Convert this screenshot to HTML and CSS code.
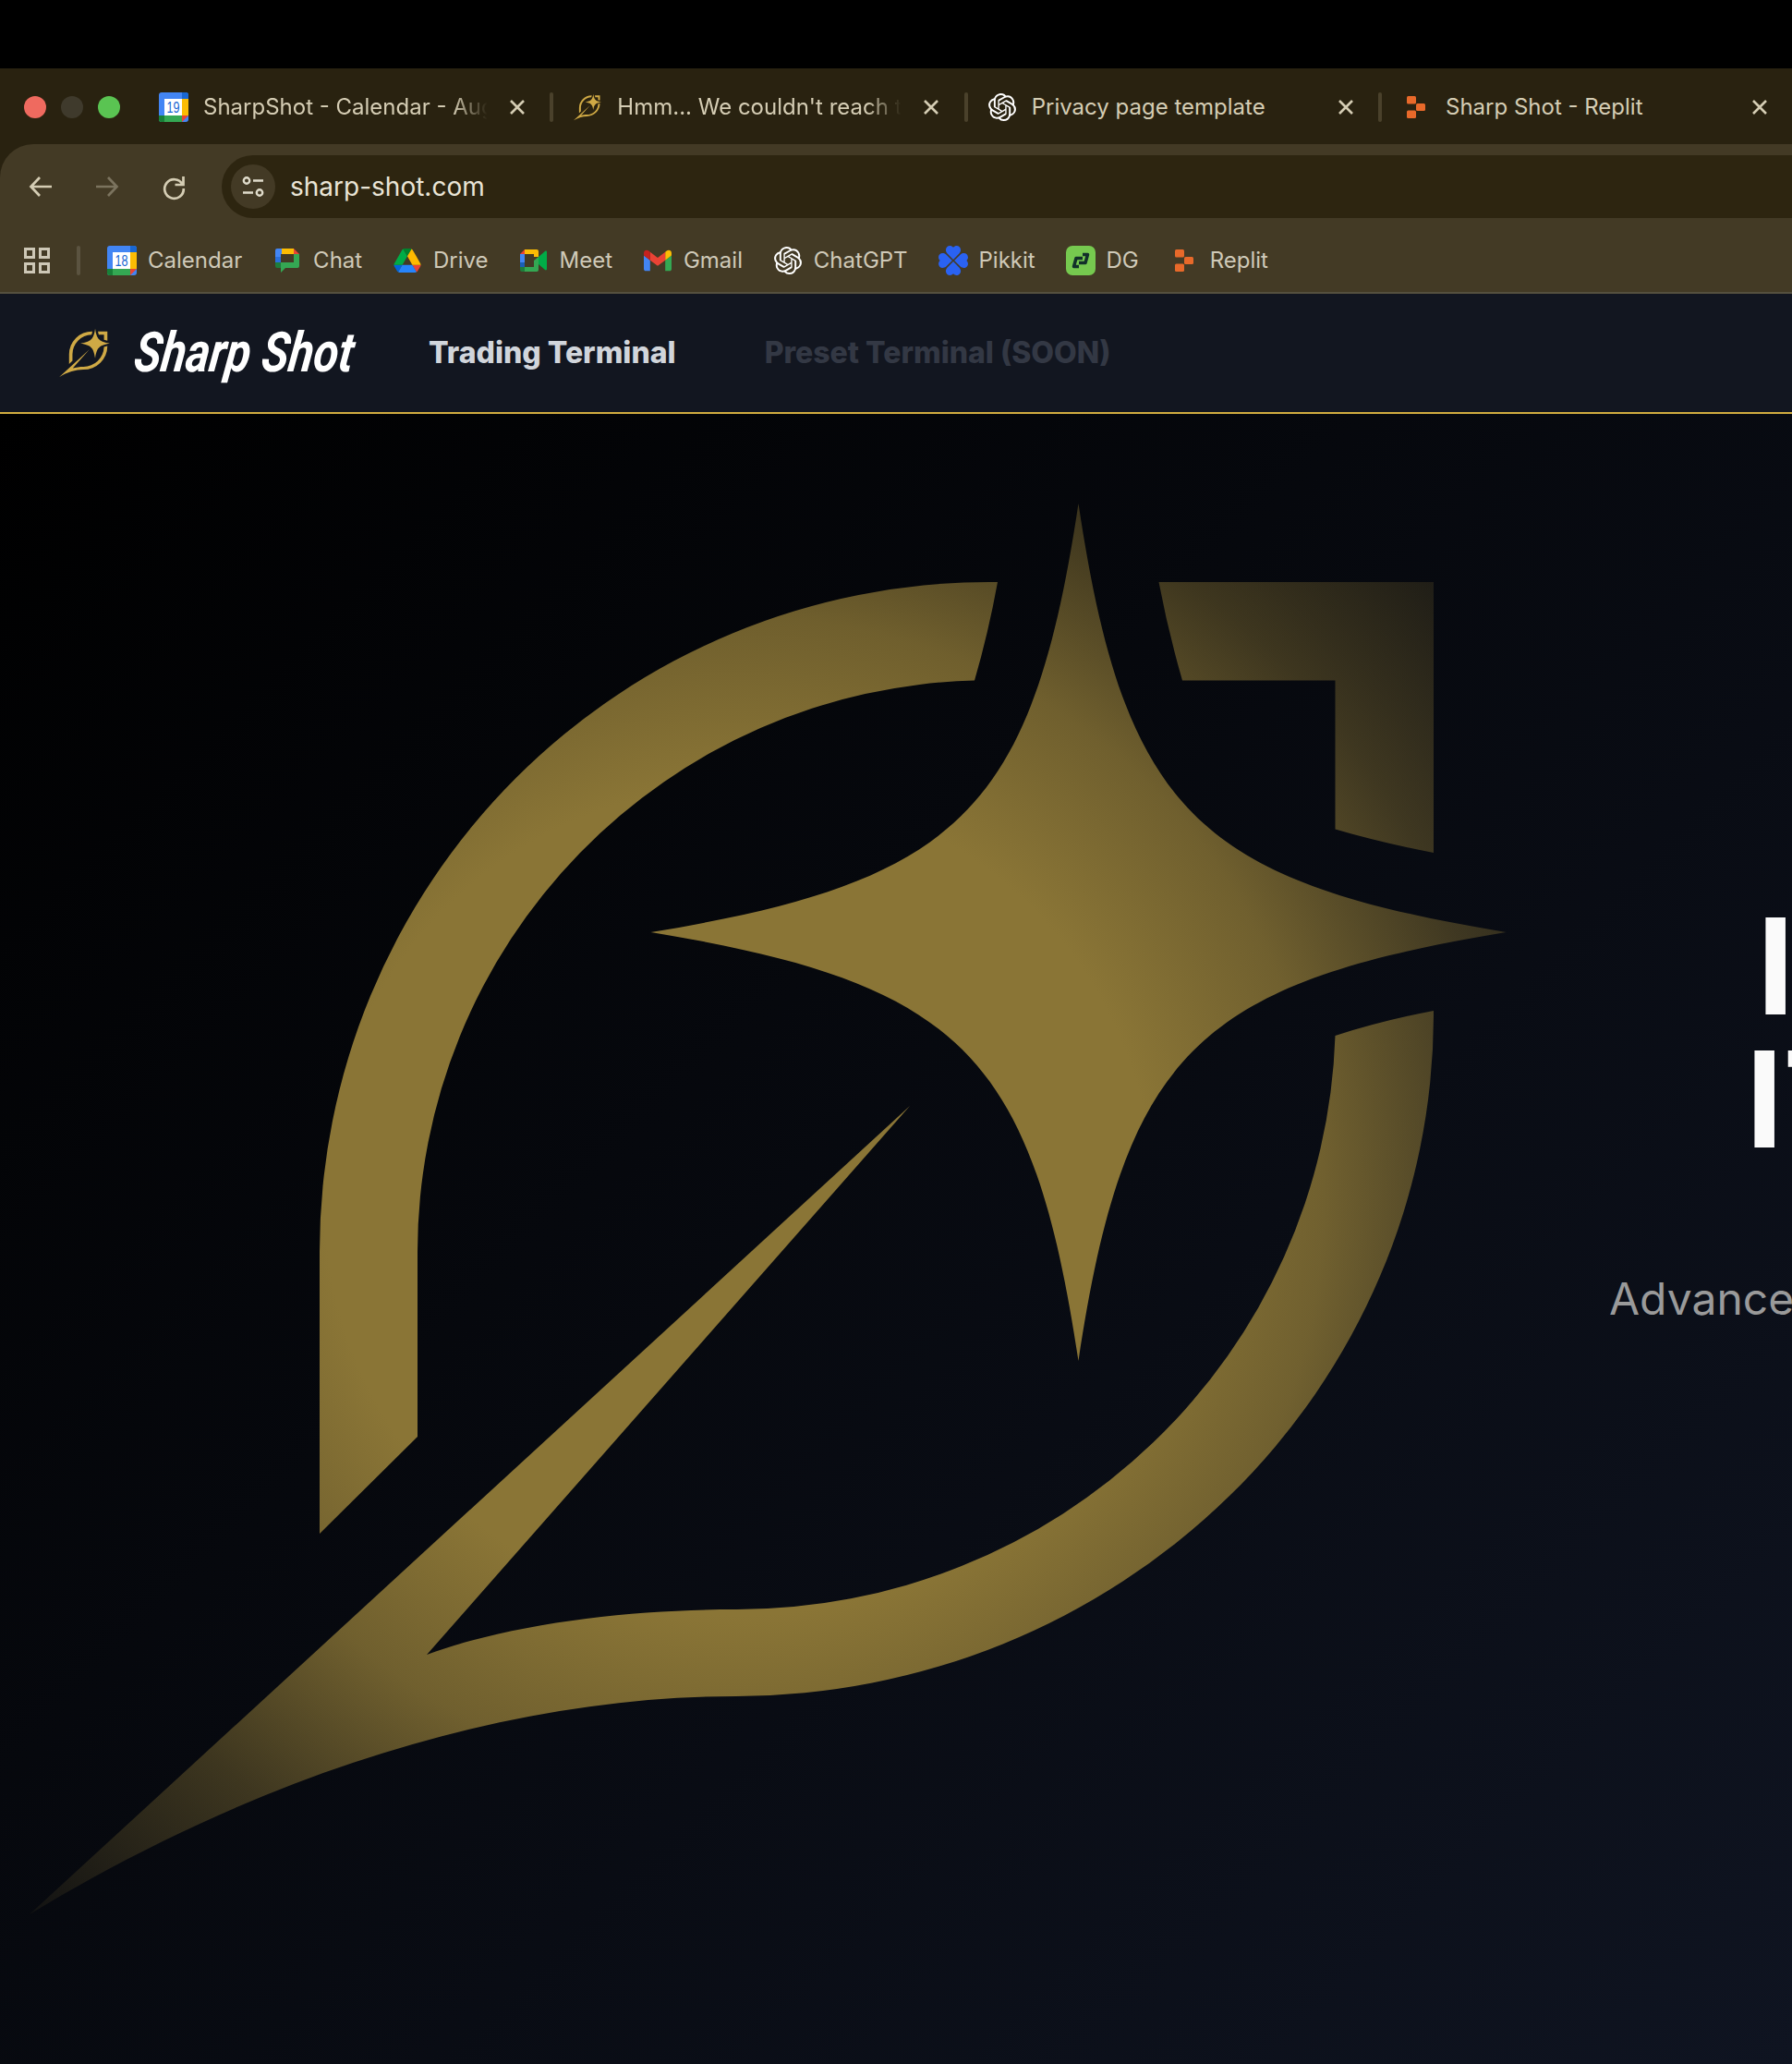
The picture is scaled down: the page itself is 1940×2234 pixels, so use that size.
FILE: index.html
```html
<!DOCTYPE html>
<html lang="en">
<head>
<meta charset="utf-8">
<title>Sharp Shot</title>
<link rel="stylesheet" href="styles.css">
</head>
<body>
<svg class="defs" width="0" height="0" aria-hidden="true">
  <defs>
    <radialGradient id="fade" gradientUnits="userSpaceOnUse" cx="800" cy="1300" r="1150">
      <stop offset="0" stop-color="#8a7536"/>
      <stop offset=".39" stop-color="#8a7536"/>
      <stop offset=".55" stop-color="#8a7536" stop-opacity=".8"/>
      <stop offset=".63" stop-color="#8a7536" stop-opacity=".62"/>
      <stop offset=".72" stop-color="#8a7536" stop-opacity=".42"/>
      <stop offset=".77" stop-color="#8a7536" stop-opacity=".34"/>
      <stop offset=".875" stop-color="#8a7536" stop-opacity=".19"/>
      <stop offset=".93" stop-color="#8a7536" stop-opacity=".11"/>
      <stop offset="1" stop-color="#8a7536" stop-opacity="0"/>
    </radialGradient>
    <path id="mark" d="M1167.5 545C1217.5 879 1297.5 954 1630.5 1009C1297.5 1064 1217.5 1139 1167.5 1473C1117.5 1139 1037.5 1064 704.5 1009C1037.5 954 1117.5 879 1167.5 545Z
      M1080 630H1071A725 725 0 0 0 346 1355V1660L452 1555V1355A619 619 0 0 1 1055 736.5Q1070 685 1080 630Z
      M1254.5 630H1552V923Q1495 912 1445.5 897.5V736.5H1280Q1265 685 1254.5 630Z
      M1552 1094V1100A757 738 0 0 1 797 1836C560 1836 290 1915 32 2072L985 1197L462 1791C560 1755 690 1742 797 1742A648 642 0 0 0 1445.5 1121Q1495 1105 1552 1094Z"/>
    <path id="openai" d="M22.2819 9.8211a5.9847 5.9847 0 0 0-.5157-4.9108 6.0462 6.0462 0 0 0-6.5098-2.9A6.0651 6.0651 0 0 0 4.9807 4.1818a5.9847 5.9847 0 0 0-3.9977 2.9 6.0462 6.0462 0 0 0 .7427 7.0966 5.98 5.98 0 0 0 .511 4.9107 6.051 6.051 0 0 0 6.5146 2.9001A5.9847 5.9847 0 0 0 13.2599 24a6.0557 6.0557 0 0 0 5.7718-4.2058 5.9894 5.9894 0 0 0 3.9977-2.9001 6.0557 6.0557 0 0 0-.7475-7.0729zm-9.022 12.6081a4.4755 4.4755 0 0 1-2.8764-1.0408l.1419-.0804 4.7783-2.7582a.7948.7948 0 0 0 .3927-.6813v-6.7369l2.02 1.1686a.071.071 0 0 1 .038.052v5.5826a4.504 4.504 0 0 1-4.4945 4.4944zm-9.6607-4.1254a4.4708 4.4708 0 0 1-.5346-3.0137l.142.0852 4.783 2.7582a.7712.7712 0 0 0 .7806 0l5.8428-3.3685v2.3324a.0804.0804 0 0 1-.0332.0615L9.74 19.9502a4.4992 4.4992 0 0 1-6.1408-1.6464zM2.3408 7.8956a4.485 4.485 0 0 1 2.3655-1.9728V11.6a.7664.7664 0 0 0 .3879.6765l5.8144 3.3543-2.0201 1.1685a.0757.0757 0 0 1-.071 0l-4.8303-2.7865A4.504 4.504 0 0 1 2.3408 7.872zm16.5963 3.8558L13.1038 8.364 15.1192 7.2a.0757.0757 0 0 1 .071 0l4.8303 2.7913a4.4944 4.4944 0 0 1-.6765 8.1042v-5.6772a.79.79 0 0 0-.407-.667zm2.0107-3.0231l-.142-.0852-4.7735-2.7818a.7759.7759 0 0 0-.7854 0L9.409 9.2297V6.8974a.0662.0662 0 0 1 .0284-.0615l4.8303-2.7866a4.4992 4.4992 0 0 1 6.6802 4.66zM8.3065 12.863l-2.02-1.1638a.0804.0804 0 0 1-.038-.0567V6.0742a4.4992 4.4992 0 0 1 7.3757-3.4537l-.142.0805L8.704 5.459a.7948.7948 0 0 0-.3927.6813zm1.0976-2.3654l2.602-1.4998 2.6069 1.4998v2.9994l-2.5974 1.4997-2.6067-1.4997Z"/>
    <g id="replit">
      <rect x="0" y="0" width="10" height="8.5" rx="1.5"/>
      <rect x="10" y="8" width="10" height="8" rx="1.5"/>
      <rect x="0" y="15.5" width="10" height="8.5" rx="1.5"/>
    </g>
    <g id="gcal">
      <rect x="0" y="0" width="32" height="32" rx="3" fill="#4285f4"/>
      <path d="M25 7h7v18h-7z" fill="#fbbc04"/>
      <path d="M0 25h25v7H3a3 3 0 0 1-3-3z" fill="#34a853"/>
      <path d="M0 25h6v7H3a3 3 0 0 1-3-3z" fill="#188038"/>
      <path d="M25 25h7l-7 7z" fill="#ea4335"/>
      <path d="M6 7h19v18H6z" fill="#fff"/>
      <path d="M25 0h4a3 3 0 0 1 3 3v4h-7z" fill="#1967d2"/>
    </g>
  </defs>
</svg>

<div class="top-black"></div>

<header class="browser">
  <div class="tabstrip">
    <div class="lights">
      <span class="light light-red"></span>
      <span class="light light-off"></span>
      <span class="light light-green"></span>
    </div>
    <div class="tabs">
      <div class="tab">
        <span class="slot"><svg class="ico32" viewBox="0 0 32 32"><use href="#gcal"/><text class="cal-num" x="15.5" y="22" textLength="14" lengthAdjust="spacingAndGlyphs">19</text></svg></span>
        <span class="tab-title tab-fade">SharpShot - Calendar - Aug</span>
        <svg class="tab-close" viewBox="0 0 16 16"><path d="M1 1l14 14M15 1L1 15"/></svg>
        <span class="tab-sep"></span>
      </div>
      <div class="tab">
        <span class="slot"><svg class="ico-feather" viewBox="32 545 1600 1528"><use href="#mark" class="gold"/></svg></span>
        <span class="tab-title tab-fade">Hmm... We couldn't reach t</span>
        <svg class="tab-close" viewBox="0 0 16 16"><path d="M1 1l14 14M15 1L1 15"/></svg>
        <span class="tab-sep"></span>
      </div>
      <div class="tab">
        <span class="slot"><svg class="ico-gpt" viewBox="0 0 24 24"><use href="#openai" class="white"/></svg></span>
        <span class="tab-title">Privacy page template</span>
        <svg class="tab-close" viewBox="0 0 16 16"><path d="M1 1l14 14M15 1L1 15"/></svg>
        <span class="tab-sep"></span>
      </div>
      <div class="tab">
        <span class="slot"><svg class="ico-replit" viewBox="0 0 20 24"><use href="#replit" class="orange"/></svg></span>
        <span class="tab-title">Sharp Shot - Replit</span>
        <svg class="tab-close" viewBox="0 0 16 16"><path d="M1 1l14 14M15 1L1 15"/></svg>
      </div>
    </div>
  </div>

  <div class="chrome">
    <div class="toolbar">
      <div class="nav-btns">
        <svg class="tool" viewBox="0 0 24 24"><path d="M24 12H2M11 2L1.500 12 11 22"/></svg>
        <svg class="tool tool-dim" viewBox="0 0 24 24"><path d="M0 12h22M13 2l9.500 10L13 22"/></svg>
        <svg class="tool" viewBox="0 0 24 24"><path d="M22.500 1v9h-9M21.500 9.500A10.300 10.300 0 1 0 22.800 14"/></svg>
      </div>
      <div class="address">
        <span class="site-btn">
          <svg class="tune" viewBox="0 0 24 24"><circle cx="5" cy="5.500" r="3.200"/><path d="M12 5.500h11M1 18.500h11"/><circle cx="19" cy="18.500" r="3.200"/></svg>
        </span>
        <span class="url">sharp-shot.com</span>
      </div>
    </div>
    <div class="bookmarks">
      <svg class="apps" viewBox="0 0 28 28"><path d="M1.500 1.500h9v9h-9zM17.500 1.500h9v9h-9zM1.500 17.500h9v9h-9zM17.500 17.500h9v9h-9z"/></svg>
      <span class="bm-sep"></span>
      <div class="bm-list">
        <a class="bm"><span class="slot"><svg class="ico32" viewBox="0 0 32 32"><use href="#gcal"/><text class="cal-num" x="15.500" y="22" textLength="14" lengthAdjust="spacingAndGlyphs">18</text></svg></span>Calendar</a>
        <a class="bm"><span class="slot"><svg class="ico-chat" viewBox="0 0 26 26">
          <path d="M2 0h5v6H6v3H0V2a2 2 0 0 1 2-2z" fill="#4285f4"/>
          <path d="M0 9h6v6H0z" fill="#2a6fdb"/>
          <path d="M7 0h13v6H7z" fill="#fbbc04"/>
          <path d="M20 0l6 6h-6z" fill="#ea4335"/>
          <path d="M20 6h6v13a2 2 0 0 1-2 2H11l-5 5v-5h0V15h14z" fill="#34a853"/>
          <path d="M0 15h6v6H2a2 2 0 0 1-2-2z" fill="#1e7d3c"/>
        </svg></span>Chat</a>
        <a class="bm"><span class="slot"><svg class="ico-drive" viewBox="0 0 87.300 78">
          <path d="m6.600 66.850 3.850 6.650c.8 1.400 1.950 2.500 3.300 3.300l13.750-23.800h-27.500c0 1.550.4 3.100 1.200 4.500z" fill="#0066da"/>
          <path d="m43.650 25-13.750-23.800c-1.350.8-2.500 1.900-3.300 3.300l-25.400 44a9.060 9.060 0 0 0 -1.200 4.500h27.500z" fill="#00ac47"/>
          <path d="m73.550 76.800c1.350-.8 2.500-1.900 3.300-3.300l1.600-2.750 7.650-13.250c.8-1.400 1.200-2.950 1.200-4.500h-27.502l5.852 11.500z" fill="#ea4335"/>
          <path d="m43.650 25 13.750-23.800c-1.350-.8-2.900-1.200-4.500-1.200h-18.500c-1.600 0-3.150.45-4.500 1.200z" fill="#00832d"/>
          <path d="m59.800 53h-32.300l-13.750 23.800c1.350.8 2.900 1.200 4.500 1.200h50.800c1.600 0 3.150-.45 4.500-1.200z" fill="#2684fc"/>
          <path d="m73.400 26.500-12.700-22c-.8-1.400-1.950-2.500-3.300-3.300l-13.750 23.800 16.150 28h27.450c0-1.550-.4-3.100-1.200-4.500z" fill="#ffba00"/>
        </svg></span>Drive</a>
        <a class="bm"><span class="slot"><svg class="ico-meet" viewBox="0 0 29 24">
          <path d="M5 0L0 5h5z" fill="#ea4335"/>
          <path d="M0 5h5v9H0z" fill="#4285f4"/>
          <path d="M0 14h5v5H0z" fill="#1a5fb4"/>
          <path d="M0 19h5v5H2a2 2 0 0 1-2-2z" fill="#1e7d3c"/>
          <path d="M5 0h13a2 2 0 0 1 2 2v6h-5V5H5z" fill="#fbbc04"/>
          <path d="M5 19h10v-7l5-4v14a2 2 0 0 1-2 2H5z" fill="#34a853"/>
          <path d="M20 8l7-6c1-.8 2-.3 2 1v18c0 1.300-1 1.800-2 1l-7-6z" fill="#00ac47"/>
        </svg></span>Meet</a>
        <a class="bm"><span class="slot"><svg class="ico-gmail" viewBox="52 42 88 66">
          <path fill="#4285f4" d="M58 108h14V74L52 59v43c0 3.320 2.690 6 6 6"/>
          <path fill="#34a853" d="M120 108h14c3.320 0 6-2.690 6-6V59l-20 15"/>
          <path fill="#fbbc04" d="M120 48v26l20-15v-8c0-7.420-8.470-11.650-14.400-7.200"/>
          <path fill="#ea4335" d="M72 74V48l24 18 24-18v26L96 92"/>
          <path fill="#c5221f" d="M52 51v8l20 15V48l-5.600-4.200c-5.940-4.450-14.400-.22-14.400 7.200"/>
        </svg></span>Gmail</a>
        <a class="bm"><span class="slot"><svg class="ico-gpt" viewBox="0 0 24 24"><use href="#openai" class="white"/></svg></span>ChatGPT</a>
        <a class="bm"><span class="slot"><svg class="ico32" viewBox="1.500 1.500 29 29">
          <g class="pikkit">
            <path d="M16 15L10 9C6 4 12-1 16 3C20-1 26 4 22 9Z"/>
            <path d="M16 15L10 9C6 4 12-1 16 3C20-1 26 4 22 9Z" transform="rotate(90 16 16)"/>
            <path d="M16 15L10 9C6 4 12-1 16 3C20-1 26 4 22 9Z" transform="rotate(180 16 16)"/>
            <path d="M16 15L10 9C6 4 12-1 16 3C20-1 26 4 22 9Z" transform="rotate(270 16 16)"/>
          </g>
        </svg></span>Pikkit</a>
        <a class="bm"><span class="slot"><svg class="ico32" viewBox="0 0 32 32">
          <rect width="32" height="32" rx="7" fill="#76c94f"/>
          <path class="dg-link" d="M14 22.500H8.500L11 13.500H18M18 9.500H23.500L21 18.500H14"/>
        </svg></span>DG</a>
        <a class="bm"><span class="slot"><svg class="ico-replit" viewBox="0 0 20 24"><use href="#replit" class="orange"/></svg></span>Replit</a>
      </div>
    </div>
  </div>
</header>

<nav class="sitenav">
  <svg class="brand-mark" viewBox="32 545 1600 1528"><use href="#mark" class="gold"/></svg>
  <span class="wordmark">Sharp Shot</span>
  <div class="links">
    <a class="link link-on">Trading Terminal</a>
    <a class="link link-off">Preset Terminal (SOON)</a>
  </div>
</nav>

<main class="hero">
  <svg class="hero-art" viewBox="0 448 1700 1786"><use href="#mark" class="fade"/></svg>
  <div class="hero-copy">
    <h1 class="headline"><span class="line line-a">I</span><span class="line line-b">IT</span></h1>
    <p class="subtitle">Advance</p>
  </div>
</main>
</body>
</html>
```

FILE: styles.css
```css
* { box-sizing: border-box; }
html, body { margin: 0; padding: 0; }
body {
  width: 1940px;
  height: 2234px;
  overflow: hidden;
  background: #000;
  font-family: Inter, "Liberation Sans", sans-serif;
}
.defs { position: absolute; }
.top-black { height: 74px; background: #000; }

.tabstrip {
  height: 82px;
  background: #292210;
  display: flex;
  align-items: center;
  padding-left: 26px;
  padding-top: 2px;
}
.lights { display: flex; gap: 16px; width: 125px; flex: none; }
.light { width: 24px; height: 24px; border-radius: 50%; }
.light-red { background: #ef6a5f; }
.light-off { background: #3f3a2c; }
.light-green { background: #5ac452; }
.tabs { display: flex; flex: none; }
.tab {
  width: 448.33px;
  flex: none;
  display: flex;
  align-items: center;
  padding-left: 21px;
}
.slot {
  width: 32px;
  height: 32px;
  flex: none;
  display: flex;
  align-items: center;
  justify-content: center;
}
.tab-title {
  width: 314px;
  margin-left: 16px;
  flex: none;
  overflow: hidden;
  white-space: nowrap;
  color: #d5cdb4;
  font-size: 24px;
  line-height: 32px;
}
.tab-fade {
  -webkit-mask-image: linear-gradient(90deg, #000 86%, transparent 98%);
  mask-image: linear-gradient(90deg, #000 86%, transparent 98%);
}
.tab-close {
  width: 16px;
  height: 16px;
  flex: none;
  margin-left: 18px;
  stroke: #d5cdb4;
  stroke-width: 2.600;
  fill: none;
}
.tab-sep {
  width: 4px;
  height: 32px;
  flex: none;
  margin-left: auto;
  border-radius: 2px;
  background: #4a412b;
}

.chrome {
  background: #433a25;
  border-top-left-radius: 36px;
  border-bottom: 2px solid #55503f;
}
.browser { background: #292210; }
.toolbar {
  height: 80px;
  padding-top: 12px;
  display: flex;
}
.nav-btns {
  width: 240px;
  flex: none;
  display: flex;
  align-items: center;
  gap: 48px;
  padding-left: 32px;
}
.tool {
  width: 24px;
  height: 24px;
  flex: none;
  overflow: visible;
  fill: none;
  stroke: #d5cdb4;
  stroke-width: 2.700;
}
.tool-dim { stroke: #7b735e; }
.address {
  flex: 1;
  height: 68px;
  background: #2d2510;
  border-radius: 34px 0 0 34px;
  display: flex;
  align-items: center;
  padding-left: 10px;
}
.site-btn {
  width: 48px;
  height: 48px;
  border-radius: 50%;
  background: #433a25;
  display: flex;
  align-items: center;
  justify-content: center;
}
.tune {
  width: 24px;
  height: 24px;
  fill: none;
  stroke: #e0dccb;
  stroke-width: 2.400;
}
.url {
  margin-left: 16px;
  color: #e9e4d6;
  font-size: 28px;
  line-height: 40px;
}

.bookmarks {
  height: 80px;
  display: flex;
  align-items: center;
  padding-left: 26px;
  padding-top: 12px;
}
.apps {
  width: 28px;
  height: 28px;
  flex: none;
  fill: none;
  stroke: #cdc7b6;
  stroke-width: 3;
}
.bm-sep {
  width: 4px;
  height: 32px;
  flex: none;
  margin-left: 29px;
  border-radius: 2px;
  background: #5b5340;
}
.bm-list {
  display: flex;
  gap: 32.900px;
  margin-left: 29px;
}
.bm {
  display: flex;
  align-items: center;
  gap: 12px;
  color: #cfc9b8;
  font-size: 24px;
  line-height: 32px;
}

.ico32 { width: 32px; height: 32px; display: block; }
.ico-feather { width: 30px; height: 32px; display: block; }
.ico-gpt { width: 30px; height: 30px; display: block; }
.ico-replit { width: 20px; height: 24px; display: block; }
.ico-chat { width: 26px; height: 26px; display: block; }
.ico-drive { width: 30px; height: 26px; display: block; }
.ico-meet { width: 29px; height: 24px; display: block; }
.ico-gmail { width: 30px; height: 24px; display: block; }
.cal-num {
  font-family: "Liberation Sans", sans-serif;
  font-size: 17px;
  fill: #1967d2;
  text-anchor: middle;
}
.gold { fill: #cfa945; }
.white { fill: #fff; }
.orange { fill: #e8692a; }
.fade { fill: url(#fade); }
.pikkit { fill: #2a62f2; }
.dg-link { fill: none; stroke: #12302a; stroke-width: 3.500; stroke-linejoin: round; }

.sitenav {
  height: 130px;
  background: #121620;
  border-bottom: 2px solid #d1ac40;
  display: flex;
  align-items: center;
  padding-left: 64px;
}
.brand-mark { width: 55px; height: 54px; flex: none; display: block; }
.wordmark {
  width: 236px;
  margin-left: 27px;
  flex: none;
  color: #fff;
  font-family: Roboto, Inter, sans-serif;
  font-style: italic;
  font-weight: 700;
  font-size: 60px;
  line-height: 72px;
  white-space: nowrap;
  transform: scaleX(.82) skewX(-9deg);
  transform-origin: left center;
}
.links { display: flex; gap: 96px; margin-left: 82px; }
.link {
  font-size: 32px;
  font-weight: 800;
  line-height: 40px;
  white-space: nowrap;
}
.link-on { color: #d1d5db; }
.link-off { color: #333844; }

.hero {
  height: 1786px;
  display: flex;
  overflow: hidden;
  background: linear-gradient(135deg, #000 0%, #0f1421 100%);
}
.hero-art { width: 1700px; height: 1786px; flex: none; display: block; }
.hero-copy { width: 240px; flex: none; padding-top: 525.500px; }
.headline {
  margin: 0;
  font-size: 144px;
  font-weight: 700;
  line-height: 144px;
  color: #fafafa;
}
.line { display: block; white-space: nowrap; }
.line-a { padding-left: 202px; }
.line-b { padding-left: 190px; }
.subtitle {
  margin: 115px 0 0;
  padding-left: 42px;
  color: #9a9a9a;
  font-size: 48px;
  line-height: 57.600px;
  white-space: nowrap;
}
```
